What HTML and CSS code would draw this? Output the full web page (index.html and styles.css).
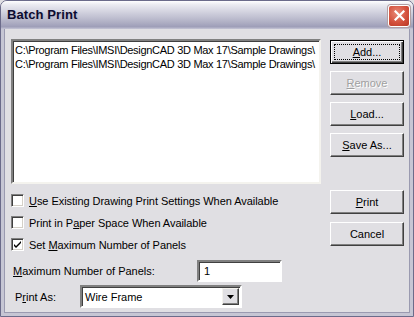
FILE: index.html
```html
<!DOCTYPE html>
<html lang="en">
<head>
  <meta charset="UTF-8">
  <title>Batch Print</title>
  <link rel="stylesheet" href="styles.css">
</head>
<body>
  <div class="window">
    <!-- title bar -->
    <div class="titlebar">
      <span class="title">Batch Print</span>
      <button type="button" class="close" aria-label="Close">
        <svg width="11" height="11" viewBox="0 0 11 11">
          <path d="M1.5 1.5 L9.5 9.5 M9.5 1.5 L1.5 9.5" stroke="#fff" stroke-width="2.2" stroke-linecap="square"/>
        </svg>
      </button>
    </div>

    <div class="client">
      <div class="left">
        <div class="list">
          <div class="item">C:\Program Files\IMSI\DesignCAD 3D Max 17\Sample Drawings\</div>
          <div class="item">C:\Program Files\IMSI\DesignCAD 3D Max 17\Sample Drawings\</div>
        </div>

        <div class="options">
          <label class="check"><span class="box"></span><span><u>U</u>se Existing Drawing Print Settings When Available</span></label>
          <label class="check"><span class="box"></span><span>Print in P<u>a</u>per Space When Available</span></label>
          <label class="check"><span class="box checked">
            <svg width="9" height="9" viewBox="0 0 9 9"><path d="M1 4 L3 6 L8 1 L8 3 L3 8 L1 6 Z" fill="#000"/></svg>
          </span><span>Set <u>M</u>aximum Number of Panels</span></label>

          <div class="field panels">
            <span class="lbl"><u>M</u>aximum Number of Panels:</span>
            <div class="edit">1</div>
          </div>
          <div class="field printas">
            <span class="lbl">P<u>r</u>int As:</span>
            <div class="combo">
              <span class="value">Wire Frame</span>
              <span class="arrow">
                <svg width="7" height="4" viewBox="0 0 7 4"><path d="M0 0 H7 L3.5 4 Z" fill="#000"/></svg>
              </span>
            </div>
          </div>
        </div>
      </div>

      <div class="right">
        <div class="btn default"><span class="focus"><u>A</u>dd...</span></div>
        <div class="btn disabled"><u>R</u>emove</div>
        <div class="btn"><u>L</u>oad...</div>
        <div class="btn"><u>S</u>ave As...</div>
        <div class="btn print"><u>P</u>rint</div>
        <div class="btn">Cancel</div>
      </div>
    </div>
  </div>
</body>
</html>
```

FILE: styles.css
```css
body { margin:0; background:#e0dfe3; font-family:"Liberation Sans", Arial, sans-serif; font-size:11px; color:#000; }
u { text-decoration:underline; text-underline-offset:1px; }

.window { width:414px; height:317px; box-sizing:border-box; display:flex; flex-direction:column; background:#e0dfe3;
  border:1px solid #6b6b8a; border-radius:7px 7px 0 0; overflow:hidden; }

.titlebar { height:28px; flex:none; display:flex; align-items:center; justify-content:space-between; padding:0 3px 0 6px;
  background:linear-gradient(#ffffff 0%, #ececf2 12%, #d6d6e2 35%, #bfbfd0 60%, #a9a9c0 82%, #9e9eb8 92%, #c6c6d6 100%); }
.title { font-weight:bold; font-size:13px; color:#0c0c30; text-shadow:1px 1px 0 #b8b8c8; letter-spacing:0.1px; margin-top:-1px; }
.close { width:22px; height:22px; padding:0; margin-top:1px; display:flex; align-items:center; justify-content:center;
  border:1px solid #fff; border-radius:3px; background:radial-gradient(circle at 40% 35%, #e88a78 0%, #d4513d 55%, #b83624 100%);
  box-shadow:0 0 0 1px #b09ea2; }

.client { flex:1; display:grid; grid-template-columns:310px 74px; column-gap:9px; padding:10px 0 0 7px;
  border:3px solid #c6c6d4; border-top:0; box-shadow:inset 1px 0 0 #9a9ab0, inset -1px 0 0 #9a9ab0, inset 0 -1px 0 #9a9ab0; }

.list { height:145px; box-sizing:border-box; background:#fff; border:2px solid; border-color:#808080 #f4f3ee #f4f3ee #808080;
  box-shadow:inset 1px 1px 0 #404040; padding:2px 0 0 2px; overflow:hidden; }
.item { white-space:nowrap; line-height:14px; letter-spacing:-0.3px; overflow:hidden; }

.options { padding-top:10px; }
.check { display:flex; align-items:center; gap:5px; height:13px; margin-bottom:9px; letter-spacing:-0.05px; }
.box { width:13px; height:13px; box-sizing:border-box; background:#fff; border:1px solid; border-color:#808080 #fff #fff #808080;
  box-shadow:inset 1px 1px 0 #404040, inset -1px -1px 0 #d4d0c8; display:flex; align-items:center; justify-content:center; }

.field { display:flex; align-items:center; }
.panels { margin-top:3px; }
.panels .lbl { width:184px; padding-left:2px; }
.edit { width:85px; height:22px; box-sizing:border-box; background:#fff; border:2px solid; border-color:#808080 #fff #fff #808080;
  box-shadow:inset 1px 1px 0 #404040; padding:3px 0 0 5px; }
.printas { margin-top:3px; }
.printas .lbl { width:65px; padding-left:4px; }
.combo { width:162px; height:23px; box-sizing:border-box; background:#fff; border:2px solid; border-color:#808080 #fff #fff #808080;
  box-shadow:inset 1px 1px 0 #404040; display:flex; align-items:center; justify-content:space-between; padding-left:2px; }
.combo .value { padding-left:1px; }
.arrow { width:17px; height:17px; box-sizing:border-box; margin-right:1px; background:#e0dfe3; border:1px solid;
  border-color:#f4f3ee #404040 #404040 #f4f3ee; box-shadow:inset -1px -1px 0 #808080; display:flex; align-items:center; justify-content:center; }

.right { display:flex; flex-direction:column; gap:7px; padding-top:1px; }
.btn { height:24px; box-sizing:border-box; display:flex; align-items:center; justify-content:center; background:#e0dfe3;
  border:1px solid; border-color:#fff #404040 #404040 #fff; box-shadow:inset -1px -1px 0 #808080; }
.btn.default { border:1px solid #000; box-shadow:inset 1px 1px 0 #fff, inset -1px -1px 0 #404040, inset -2px -2px 0 #808080; padding:3px; }
.btn.default .focus { flex:1; align-self:stretch; display:flex; align-items:center; justify-content:center; border:1px dotted #000; }
.btn.disabled { color:#a0a0a0; text-shadow:1px 1px 0 #fff; }
.btn.print { margin-top:26px; }
.btn.print + .btn { margin-top:1px; }
```
